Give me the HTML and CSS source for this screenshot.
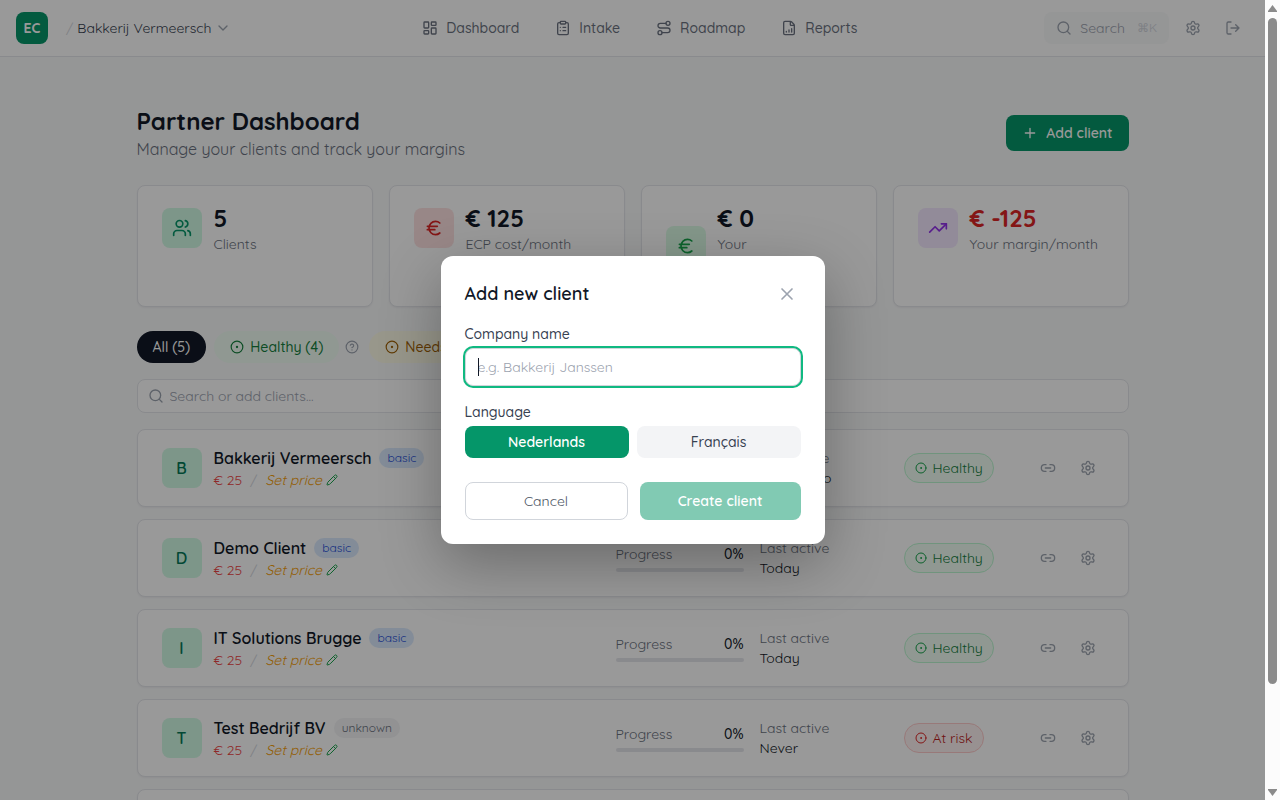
FILE: index.html
```html
<!doctype html>
<html lang="en">
<head>
	<meta charset="UTF-8">
	<meta name="viewport" content="width=device-width, initial-scale=1.0">
	<title>Partner Dashboard</title>
	<link rel="stylesheet" href="styles.css">
</head>
<body>
<svg class="sprite" aria-hidden="true">
	<symbol id="i-dashboard" viewBox="0 0 24 24"><rect width="7" height="9" x="3" y="3" rx="1"/><rect width="7" height="5" x="14" y="3" rx="1"/><rect width="7" height="9" x="14" y="12" rx="1"/><rect width="7" height="5" x="3" y="16" rx="1"/></symbol>
	<symbol id="i-intake" viewBox="0 0 24 24"><rect width="8" height="4" x="8" y="2" rx="1"/><path d="M16 4h2a2 2 0 0 1 2 2v14a2 2 0 0 1-2 2H6a2 2 0 0 1-2-2V6a2 2 0 0 1 2-2h2M12 11h4M12 16h4M8 11h.01M8 16h.01"/></symbol>
	<symbol id="i-route" viewBox="0 0 24 24"><circle cx="6" cy="19" r="3"/><path d="M9 19h8.5a3.5 3.5 0 0 0 0-7h-11a3.5 3.5 0 0 1 0-7H15"/><circle cx="18" cy="5" r="3"/></symbol>
	<symbol id="i-report" viewBox="0 0 24 24"><path d="M6 22a2 2 0 0 1-2-2V4a2 2 0 0 1 2-2h8a2.4 2.4 0 0 1 1.704.706l3.588 3.588A2.4 2.4 0 0 1 20 8v12a2 2 0 0 1-2 2zM14 2v5a1 1 0 0 0 1 1h5M8 18v-1M12 18v-3M16 18v-5"/></symbol>
	<symbol id="i-search" viewBox="0 0 24 24"><circle cx="11" cy="11" r="8"/><path d="m21 21-4.3-4.3"/></symbol>
	<symbol id="i-gear" viewBox="0 0 24 24"><path d="M9.671 4.136a2.34 2.34 0 0 1 4.659 0 2.34 2.34 0 0 0 3.319 1.915 2.34 2.34 0 0 1 2.33 4.033 2.34 2.34 0 0 0 0 3.831 2.34 2.34 0 0 1-2.33 4.033 2.34 2.34 0 0 0-3.319 1.915 2.34 2.34 0 0 1-4.659 0 2.34 2.34 0 0 0-3.32-1.915 2.34 2.34 0 0 1-2.33-4.033 2.34 2.34 0 0 0 0-3.831A2.34 2.34 0 0 1 6.35 6.051a2.34 2.34 0 0 0 3.319-1.915"/><circle cx="12" cy="12" r="3"/></symbol>
	<symbol id="i-logout" viewBox="0 0 24 24"><path d="m16 17 5-5-5-5M21 12H9M9 21H5a2 2 0 0 1-2-2V5a2 2 0 0 1 2-2h4"/></symbol>
	<symbol id="i-down" viewBox="0 0 24 24"><path d="m6 9 6 6 6-6"/></symbol>
	<symbol id="i-plus" viewBox="0 0 24 24"><path d="M5 12h14M12 5v14"/></symbol>
	<symbol id="i-users" viewBox="0 0 24 24"><path d="M16 21v-2a4 4 0 0 0-4-4H6a4 4 0 0 0-4 4v2M16 3.128a4 4 0 0 1 0 7.744M22 21v-2a4 4 0 0 0-3-3.87"/><circle cx="9" cy="7" r="4"/></symbol>
	<symbol id="i-euro" viewBox="0 0 24 24"><path d="M4 10h12M4 14h9M19 6a7.7 7.7 0 0 0-5.2-2A7.9 7.9 0 0 0 6 12c0 4.4 3.5 8 7.8 8 2 0 3.8-.8 5.2-2"/></symbol>
	<symbol id="i-trend" viewBox="0 0 24 24"><path d="M16 7h6v6"/><path d="m22 7-8.5 8.5-5-5L2 17"/></symbol>
	<symbol id="i-dot" viewBox="0 0 24 24"><circle cx="12" cy="12" r="10"/><circle cx="12" cy="12" r="1"/></symbol>
	<symbol id="i-help" viewBox="0 0 24 24"><circle cx="12" cy="12" r="10"/><path d="M9.09 9a3 3 0 0 1 5.83 1c0 2-3 3-3 3M12 17h.01"/></symbol>
	<symbol id="i-pencil" viewBox="0 0 24 24"><path d="M21.174 6.812a1 1 0 0 0-3.986-3.987L3.842 16.174a2 2 0 0 0-.5.83l-1.321 4.352a.5.5 0 0 0 .623.622l4.353-1.32a2 2 0 0 0 .83-.497zM15 5l4 4"/></symbol>
	<symbol id="i-link" viewBox="0 0 24 24"><path d="M9 17H7A5 5 0 0 1 7 7h2M15 7h2a5 5 0 1 1 0 10h-2M8 12h8"/></symbol>
	<symbol id="i-close" viewBox="0 0 24 24"><path d="M18 6 6 18M6 6l12 12"/></symbol>
</svg>

<div class="view">
	<header class="topbar">
		<div class="brand">
			<a class="logo" href="#">EC</a>
			<button class="switcher"><span class="slash">/</span>Bakkerij Vermeersch<svg class="icon"><use href="#i-down"/></svg></button>
		</div>
		<nav class="nav">
			<a href="#"><svg class="icon"><use href="#i-dashboard"/></svg>Dashboard</a>
			<a href="#"><svg class="icon"><use href="#i-intake"/></svg>Intake</a>
			<a href="#"><svg class="icon"><use href="#i-route"/></svg>Roadmap</a>
			<a href="#"><svg class="icon"><use href="#i-report"/></svg>Reports</a>
		</nav>
		<div class="tools">
			<button class="search-btn"><svg class="icon"><use href="#i-search"/></svg>Search<kbd>⌘K</kbd></button>
			<button class="icon-btn" aria-label="Settings"><svg class="icon"><use href="#i-gear"/></svg></button>
			<button class="icon-btn" aria-label="Log out"><svg class="icon"><use href="#i-logout"/></svg></button>
		</div>
	</header>

	<main class="page">
		<div class="page-head">
			<div>
				<h1>Partner Dashboard</h1>
				<p>Manage your clients and track your margins</p>
			</div>
			<button class="add-btn"><svg class="icon"><use href="#i-plus"/></svg>Add client</button>
		</div>

		<section class="stats">
			<div class="stat">
				<div class="stat-body">
					<span class="tile green"><svg class="icon s20"><use href="#i-users"/></svg></span>
					<div>
						<p class="value">5</p>
						<p class="label">Clients</p>
					</div>
				</div>
			</div>
			<div class="stat">
				<div class="stat-body">
					<span class="tile red"><svg class="icon s20"><use href="#i-euro"/></svg></span>
					<div>
						<p class="value">€ 125</p>
						<p class="label">ECP cost/month</p>
					</div>
				</div>
			</div>
			<div class="stat">
				<div class="stat-body">
					<span class="tile lime"><svg class="icon s20"><use href="#i-euro"/></svg></span>
					<div>
						<p class="value">€ 0</p>
						<p class="label">Your<br>revenue/month</p>
						<p class="hint">5 unpriced</p>
					</div>
				</div>
			</div>
			<div class="stat">
				<div class="stat-body">
					<span class="tile purple"><svg class="icon s20"><use href="#i-trend"/></svg></span>
					<div>
						<p class="value negative">€ -125</p>
						<p class="label">Your margin/month</p>
					</div>
				</div>
			</div>
		</section>

		<div class="filters">
			<button class="chip all">All (5)</button>
			<div class="chip-group">
				<button class="chip healthy"><svg class="icon s14"><use href="#i-dot"/></svg>Healthy (4)</button>
				<button class="help" aria-label="About healthy"><svg class="icon s14"><use href="#i-help"/></svg></button>
			</div>
			<button class="chip attention"><svg class="icon s14"><use href="#i-dot"/></svg>Needs attention</button>
		</div>

		<label class="search-box">
			<svg class="icon"><use href="#i-search"/></svg>
			<input type="text" placeholder="Search or add clients..." aria-label="Search or add clients">
		</label>

		<section class="clients">
			<article class="client">
				<span class="tile green letter">B</span>
				<div class="who">
					<div class="name">Bakkerij Vermeersch<span class="plan basic">basic</span></div>
					<div class="price"><span class="cost">€ 25</span><span class="slash">/</span><button class="set-price">Set price<svg class="icon s12"><use href="#i-pencil"/></svg></button></div>
				</div>
				<div class="progress">
					<div class="progress-text"><span>Progress</span><b>0%</b></div>
					<div class="bar"></div>
				</div>
				<div class="active"><span>Last active</span><b>6 days ago</b></div>
				<div class="status"><span class="badge ok"><svg class="icon s12"><use href="#i-dot"/></svg>Healthy</span></div>
				<div class="actions">
					<button class="icon-btn" aria-label="Copy link"><svg class="icon"><use href="#i-link"/></svg></button>
					<button class="icon-btn" aria-label="Client settings"><svg class="icon"><use href="#i-gear"/></svg></button>
				</div>
			</article>
			<article class="client">
				<span class="tile green letter">D</span>
				<div class="who">
					<div class="name">Demo Client<span class="plan basic">basic</span></div>
					<div class="price"><span class="cost">€ 25</span><span class="slash">/</span><button class="set-price">Set price<svg class="icon s12"><use href="#i-pencil"/></svg></button></div>
				</div>
				<div class="progress">
					<div class="progress-text"><span>Progress</span><b>0%</b></div>
					<div class="bar"></div>
				</div>
				<div class="active"><span>Last active</span><b>Today</b></div>
				<div class="status"><span class="badge ok"><svg class="icon s12"><use href="#i-dot"/></svg>Healthy</span></div>
				<div class="actions">
					<button class="icon-btn" aria-label="Copy link"><svg class="icon"><use href="#i-link"/></svg></button>
					<button class="icon-btn" aria-label="Client settings"><svg class="icon"><use href="#i-gear"/></svg></button>
				</div>
			</article>
			<article class="client">
				<span class="tile green letter">I</span>
				<div class="who">
					<div class="name">IT Solutions Brugge<span class="plan basic">basic</span></div>
					<div class="price"><span class="cost">€ 25</span><span class="slash">/</span><button class="set-price">Set price<svg class="icon s12"><use href="#i-pencil"/></svg></button></div>
				</div>
				<div class="progress">
					<div class="progress-text"><span>Progress</span><b>0%</b></div>
					<div class="bar"></div>
				</div>
				<div class="active"><span>Last active</span><b>Today</b></div>
				<div class="status"><span class="badge ok"><svg class="icon s12"><use href="#i-dot"/></svg>Healthy</span></div>
				<div class="actions">
					<button class="icon-btn" aria-label="Copy link"><svg class="icon"><use href="#i-link"/></svg></button>
					<button class="icon-btn" aria-label="Client settings"><svg class="icon"><use href="#i-gear"/></svg></button>
				</div>
			</article>
			<article class="client">
				<span class="tile green letter">T</span>
				<div class="who">
					<div class="name">Test Bedrijf BV<span class="plan">unknown</span></div>
					<div class="price"><span class="cost">€ 25</span><span class="slash">/</span><button class="set-price">Set price<svg class="icon s12"><use href="#i-pencil"/></svg></button></div>
				</div>
				<div class="progress">
					<div class="progress-text"><span>Progress</span><b>0%</b></div>
					<div class="bar"></div>
				</div>
				<div class="active"><span>Last active</span><b>Never</b></div>
				<div class="status"><span class="badge risk"><svg class="icon s12"><use href="#i-dot"/></svg>At risk</span></div>
				<div class="actions">
					<button class="icon-btn" aria-label="Copy link"><svg class="icon"><use href="#i-link"/></svg></button>
					<button class="icon-btn" aria-label="Client settings"><svg class="icon"><use href="#i-gear"/></svg></button>
				</div>
			</article>
			<article class="client empty"></article>
		</section>
	</main>

	<div class="overlay">
		<form class="modal" role="dialog" aria-labelledby="modal-title">
			<div class="modal-head">
				<h2 id="modal-title">Add new client</h2>
				<button type="button" class="close" aria-label="Close"><svg class="icon s20"><use href="#i-close"/></svg></button>
			</div>
			<div class="field">
				<label for="company">Company name</label>
				<div class="input-wrap">
					<input id="company" type="text" placeholder="e.g. Bakkerij Janssen" autofocus>
				</div>
			</div>
			<div class="field">
				<span id="lang-label">Language</span>
				<div class="langs" role="group" aria-labelledby="lang-label">
					<button type="button" class="on">Nederlands</button>
					<button type="button">Français</button>
				</div>
			</div>
			<div class="modal-foot">
				<button type="button" class="cancel">Cancel</button>
				<button type="submit" class="create" disabled>Create client</button>
			</div>
		</form>
	</div>
</div>

<div class="scrollbar" aria-hidden="true">
	<svg class="arrow" viewBox="0 0 9 7"><path d="M4.500 0 0 6v1h9V6z"/></svg>
	<div class="track"><div class="thumb"></div></div>
	<svg class="arrow" viewBox="0 0 9 7"><path d="M4.500 7 0 1V0h9v1z"/></svg>
</div>
</body>
</html>
```
FILE: styles.css
```css
* {
	box-sizing: border-box;
	margin: 0;
	padding: 0;
}
body {
	display: flex;
	height: 100vh;
	overflow: hidden;
	font-family: Quicksand, sans-serif;
	font-size: 14px;
	line-height: 20px;
	color: #111827;
	background: #f9fafb;
}
button, input, kbd {
	font: inherit;
	color: inherit;
}
button {
	border: 0;
	background: none;
	cursor: pointer;
	white-space: nowrap;
}
a {
	color: inherit;
	text-decoration: none;
}
.sprite {
	display: none;
}
.icon {
	width: 16px;
	height: 16px;
	flex-shrink: 0;
	fill: none;
	stroke: currentColor;
	stroke-width: 2;
	stroke-linecap: round;
	stroke-linejoin: round;
}
.s12 { width: 12px; height: 12px; }
.s14 { width: 14px; height: 14px; }
.s20 { width: 20px; height: 20px; }
.slash {
	color: #d1d5db;
}

/* scrolling area and its bar */
.view {
	position: relative;
	flex: 1;
	overflow: hidden;
}
.scrollbar {
	display: flex;
	flex-direction: column;
	align-items: center;
	gap: 6px;
	width: 15px;
	padding: 5px 0 4px;
	background: #fcfcfc;
}
.arrow {
	width: 9px;
	height: 7px;
	fill: #8b8b8b;
}
.track {
	flex: 1;
	width: 9px;
}
.thumb {
	height: 87%;
	border-radius: 5px;
	background: #8b8b8b;
}

/* top bar */
.topbar {
	display: flex;
	align-items: center;
	justify-content: space-between;
	height: 57px;
	padding: 0 16px;
	background: #fff;
	border-bottom: 1px solid #e5e7eb;
}
.brand, .switcher, .nav, .nav a, .tools, .search-btn {
	display: flex;
	align-items: center;
}
.brand {
	gap: 18px;
}
.logo {
	display: flex;
	align-items: center;
	justify-content: center;
	width: 32px;
	height: 32px;
	border-radius: 8px;
	background: #059669;
	color: #fff;
	font-weight: 700;
}
.switcher {
	gap: 4px;
	padding-right: 4px;
	color: #374151;
}
.switcher .icon {
	color: #9ca3af;
}
.nav {
	gap: 4px;
	color: #6b7280;
	font-weight: 500;
}
.nav a {
	gap: 8px;
	padding: 6px 16px;
}
.tools {
	gap: 8px;
}
.search-btn {
	gap: 8px;
	height: 32px;
	padding: 0 12px;
	border-radius: 8px;
	background: #f9fafb;
	color: #9ca3af;
}
.search-btn kbd {
	margin-left: 4px;
	font-size: 12px;
	color: #d1d5db;
}
.icon-btn {
	display: flex;
	align-items: center;
	justify-content: center;
	width: 32px;
	height: 32px;
	color: #9ca3af;
}

/* page */
.page {
	max-width: 1024px;
	margin: 0 auto;
	padding: 48px 16px;
}
.page-head {
	display: flex;
	align-items: center;
	justify-content: space-between;
	margin-bottom: 24px;
}
h1 {
	font-size: 24px;
	line-height: 32px;
	font-weight: 700;
}
.page-head p {
	font-size: 16px;
	line-height: 24px;
	color: #6b7280;
}
.add-btn {
	display: flex;
	align-items: center;
	gap: 8px;
	padding: 8px 16px;
	border-radius: 8px;
	background: #059669;
	color: #fff;
	font-weight: 600;
}
.stats {
	display: grid;
	grid-template-columns: repeat(4, 1fr);
	gap: 16px;
	margin-bottom: 24px;
}
.stat, .client {
	background: #fff;
	border: 1px solid #e5e7eb;
	border-radius: 8px;
	padding: 16px 24px;
	box-shadow: 0 1px 2px rgba(0, 0, 0, .05);
}
.stat-body {
	display: flex;
	align-items: center;
	gap: 12px;
}
.tile {
	display: flex;
	align-items: center;
	justify-content: center;
	width: 40px;
	height: 40px;
	flex-shrink: 0;
	border-radius: 8px;
}
.green { background: #d1fae5; color: #059669; }
.red { background: #fee2e2; color: #dc2626; }
.lime { background: #dcfce7; color: #16a34a; }
.purple { background: #f3e8ff; color: #9333ea; }
.value {
	font-size: 24px;
	line-height: 32px;
	font-weight: 700;
}
.negative {
	color: #dc2626;
}
.label {
	color: #6b7280;
	white-space: nowrap;
}
.hint {
	font-size: 12px;
	line-height: 16px;
	color: #f59e0b;
}

/* filters */
.filters {
	display: flex;
	align-items: center;
	gap: 8px;
	margin-bottom: 16px;
}
.chip-group {
	display: flex;
	align-items: center;
	gap: 4px;
}
.chip {
	display: flex;
	align-items: center;
	gap: 6px;
	height: 32px;
	padding: 0 16px;
	border-radius: 16px;
	font-weight: 500;
}
.all { background: #111827; color: #fff; }
.healthy { background: #f0fdf4; color: #15803d; }
.attention { background: #fefce8; color: #a16207; }
.help {
	display: flex;
	padding: 2px;
	color: #9ca3af;
}
.search-box {
	display: flex;
	align-items: center;
	gap: 6px;
	height: 34px;
	margin-bottom: 16px;
	padding: 0 10px;
	border: 1px solid #e5e7eb;
	border-radius: 8px;
	background: #fff;
	color: #9ca3af;
}
.search-box input {
	flex: 1;
	border: 0;
	outline: 0;
	background: none;
}
input::placeholder {
	color: #9ca3af;
}

/* client rows */
.clients {
	display: flex;
	flex-direction: column;
	gap: 12px;
}
.client {
	display: flex;
	align-items: center;
	gap: 16px;
}
.empty {
	min-height: 78px;
}
.letter {
	color: #047857;
	font-size: 16px;
	font-weight: 600;
}
.who {
	flex: 1;
	margin-left: -4px;
}
.name {
	display: flex;
	align-items: center;
	gap: 8px;
	font-size: 16px;
	line-height: 24px;
	font-weight: 600;
}
.plan {
	padding: 2px 8px;
	border-radius: 10px;
	background: #f3f4f6;
	color: #6b7280;
	font-size: 12px;
	line-height: 16px;
	font-weight: 400;
}
.basic {
	background: #dbeafe;
	color: #1d4ed8;
}
.price, .set-price {
	display: flex;
	align-items: center;
}
.price {
	gap: 8px;
}
.cost {
	color: #ef4444;
}
.set-price {
	gap: 4px;
	color: #f59e0b;
	font-style: italic;
}
.set-price .icon {
	color: #16a34a;
}
.progress {
	width: 128px;
}
.progress-text {
	display: flex;
	justify-content: space-between;
	margin-bottom: 4px;
	color: #6b7280;
}
.progress b {
	color: #111827;
	font-weight: 500;
}
.active b {
	color: #111827;
	font-weight: 400;
}
.bar {
	height: 4px;
	border-radius: 2px;
	background: #e5e7eb;
}
.active {
	display: flex;
	flex-direction: column;
	width: 128px;
	color: #6b7280;
}
.status {
	width: 112px;
}
.badge {
	display: inline-flex;
	align-items: center;
	gap: 6px;
	padding: 4px 10px;
	border: 1px solid;
	border-radius: 15px;
}
.ok { background: #f0fdf4; border-color: #bbf7d0; color: #15803d; }
.risk { background: #fef2f2; border-color: #fecaca; color: #b91c1c; }
.ok .icon { color: #16a34a; }
.risk .icon { color: #dc2626; }
.actions {
	display: flex;
	gap: 8px;
}

/* modal */
.overlay {
	position: absolute;
	inset: 0;
	display: flex;
	align-items: center;
	justify-content: center;
	background: rgba(0, 0, 0, .4);
}
.modal {
	width: 384px;
	padding: 24px;
	border-radius: 12px;
	background: #fff;
	box-shadow: 0 20px 60px rgba(0, 0, 0, .3);
}
.modal-head {
	display: flex;
	align-items: center;
	justify-content: space-between;
	margin-bottom: 16px;
}
h2 {
	font-size: 18px;
	line-height: 28px;
	font-weight: 600;
}
.close {
	display: flex;
	padding: 4px;
	color: #9ca3af;
}
.field {
	margin-bottom: 16px;
	color: #374151;
	font-weight: 500;
}
.field label, .field > span {
	display: block;
	margin-bottom: 4px;
}
.input-wrap {
	position: relative;
}
/* text caret */
.input-wrap::before {
	content: "";
	position: absolute;
	top: 10px;
	left: 13px;
	width: 1px;
	height: 18px;
	background: #111827;
}
.field input {
	display: block;
	width: 100%;
	height: 38px;
	padding: 0 12px;
	border: 1px solid #d1d5db;
	border-radius: 8px;
	outline: 0;
	color: #111827;
	caret-color: transparent;
	font-weight: 400;
	box-shadow: 0 0 0 2px #10b981;
}
.langs {
	display: flex;
	gap: 8px;
}
.langs button {
	flex: 1;
	height: 32px;
	border-radius: 8px;
	background: #f3f4f6;
	color: #374151;
	font-weight: 500;
}
.langs .on {
	background: #059669;
	color: #fff;
	font-weight: 600;
}
.modal-foot {
	display: flex;
	gap: 12px;
	margin-top: 24px;
}
.modal-foot button {
	flex: 1;
	height: 38px;
	padding: 0 16px;
	border-radius: 8px;
}
.modal-foot .cancel {
	border: 1px solid #d1d5db;
	color: #4b5563;
}
.modal-foot .create {
	background: #059669;
	color: #fff;
	font-weight: 600;
	opacity: .5;
}
```
